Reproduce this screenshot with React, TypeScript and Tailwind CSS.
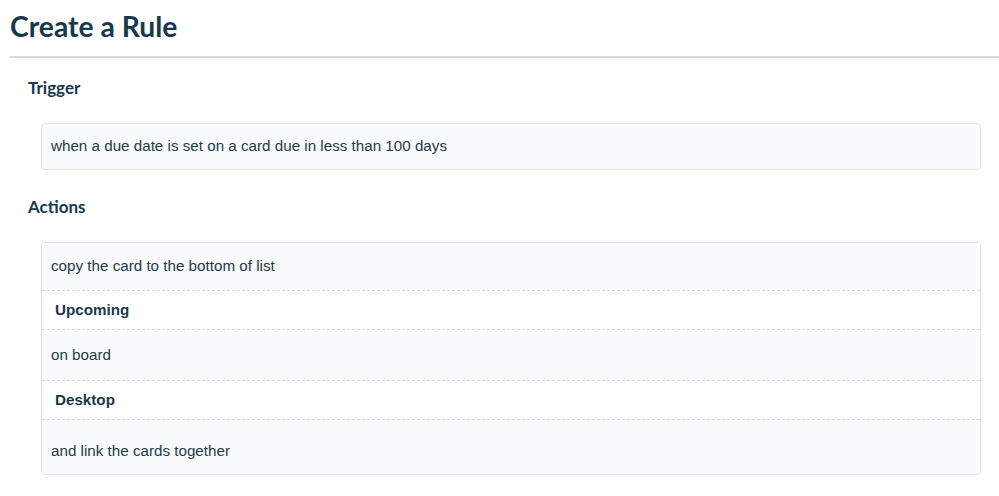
import React from "react";

const rows = [
  { text: "copy the card to the bottom of list", kind: "text", h: "h-[47px]" },
  { text: "Upcoming", kind: "label", h: "h-[39px]" },
  { text: "on board", kind: "text", h: "h-[51px]" },
  { text: "Desktop", kind: "label", h: "h-[39px]" },
  { text: "and link the cards together", kind: "text", h: "h-[55px]", pt: true },
];

export default function App() {
  return (
    <div className="min-h-screen bg-white pl-[10px] font-['Liberation_Sans',Arial,sans-serif] text-[#253a48]">
      {/* 헤더 */}
      <h1 className="pt-[9px] font-['Lato',sans-serif] text-[28.3px] font-bold leading-[34px] text-[#17394d]">
        Create a Rule
      </h1>
      <div className="mt-[13px] h-[2px] bg-[#dadada]" />

      <div className="pl-[18px] pr-[18px]">
        {/* 트리거 */}
        <h2 className="mt-[19px] font-['Lato',sans-serif] text-[17px] font-bold leading-[22px] text-[#17394d]">
          Trigger
        </h2>
        <div className="ml-[13px] mt-[24px] flex h-[47px] items-center rounded-[4px] border border-[#e0e2e7] bg-[#f9fafc] px-[9px] text-[15.2px]">
          when a due date is set on a card due in less than 100 days
        </div>

        {/* 액션 */}
        <h2 className="mt-[26px] font-['Lato',sans-serif] text-[17px] font-bold leading-[22px] text-[#17394d]">
          Actions
        </h2>
        <div className="ml-[13px] mt-[24px] overflow-hidden rounded-[4px] border border-[#e0e2e7]">
          {rows.map((r, i) => (
            <div
              key={i}
              className={`flex ${r.h} items-center ${i > 0 ? "border-t border-dashed border-[#d5d8de]" : ""} ${
                r.kind === "label"
                  ? "bg-white px-[13px] font-bold text-[#17394d]"
                  : "bg-[#f9fafc] px-[9px]"
              } ${r.pt ? "pt-[8px]" : ""} text-[15.2px]`}
            >
              {r.text}
            </div>
          ))}
        </div>
      </div>
    </div>
  );
}
